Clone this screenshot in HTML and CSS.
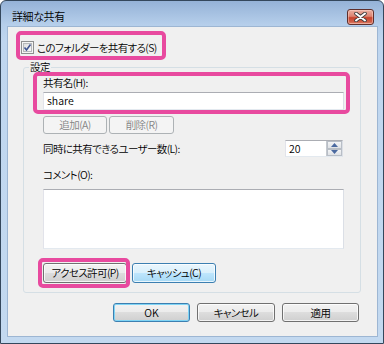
FILE: index.html
```html
<!DOCTYPE html>
<html lang="ja">
<head>
<meta charset="utf-8">
<title>詳細な共有</title>
<link rel="stylesheet" href="styles.css">
</head>
<body>
<div class="window">
  <div class="titlebar">
    <span class="title">詳細な共有</span>
    <div class="close">
      <svg width="13" height="10" viewBox="0 0 13 10">
        <path d="M2 1.5 L11 8.5 M11 1.5 L2 8.5" stroke="#3b3b3b" stroke-width="3.6" stroke-linecap="round"/>
        <path d="M2 1.5 L11 8.5 M11 1.5 L2 8.5" stroke="#ffffff" stroke-width="2" stroke-linecap="round"/>
      </svg>
    </div>
  </div>
  <div class="client">
    <div class="share-check hl-wrap hl-1">
      <span class="checkbox">
        <svg width="13" height="13" viewBox="0 0 13 13">
          <defs>
            <linearGradient id="cbg" x1="0" y1="0" x2="1" y2="1">
              <stop offset="0" stop-color="#dcdcdc"/>
              <stop offset="1" stop-color="#fbfbfb"/>
            </linearGradient>
          </defs>
          <rect x="0.5" y="0.5" width="12" height="12" fill="#f4f4f4" stroke="#8e8f8f"/>
          <rect x="2.5" y="2.5" width="8" height="8" fill="url(#cbg)" stroke="#b6b8ba" stroke-width="1"/>
          <path d="M3.5 6.5 L5.5 9 L9.5 3.5" fill="none" stroke="#3f5591" stroke-width="1.6"/>
        </svg>
      </span>
      <span class="check-text">このフォルダーを共有する(S)</span>
    </div>

    <div class="group">
      <div class="group-title">設定</div>

      <div class="field hl-wrap hl-2">
        <div class="label">共有名(H):</div>
        <div class="textbox">share</div>
      </div>

      <div class="btn-row">
        <div class="btn disabled w-add">追加(A)</div>
        <div class="btn disabled w-del">削除(R)</div>
      </div>

      <div class="limit-row">
        <span class="label">同時に共有できるユーザー数(L):</span>
        <div class="spin">
          <span class="spin-value">20</span>
          <span class="spin-btns">
            <span class="spin-btn"><svg width="7" height="4" viewBox="0 0 7 4"><path d="M0 4 L3.5 0 L7 4 Z" fill="#4b6aa0"/></svg></span>
            <span class="spin-btn"><svg width="7" height="4" viewBox="0 0 7 4"><path d="M0 0 L3.5 4 L7 0 Z" fill="#4b6aa0"/></svg></span>
          </span>
        </div>
      </div>

      <div class="label comment-label">コメント(O):</div>
      <div class="textarea"></div>

      <div class="btn-row2">
        <div class="hl-wrap hl-3"><div class="btn w-wide">アクセス許可(P)</div></div>
        <div class="btn hover w-wide">キャッシュ(C)</div>
      </div>
    </div>

    <div class="footer">
      <div class="btn default w-ok">OK</div>
      <div class="btn w-cancel">キャンセル</div>
      <div class="btn w-apply">適用</div>
    </div>
  </div>
</div>
</body>
</html>
```

FILE: styles.css
```css
* {
  box-sizing: border-box;
}

body {
  margin: 0;
  background: #ffffff;
  font-family: "Noto Sans CJK JP", "Noto Sans", sans-serif;
  font-size: 10.5px;
  font-weight: 350;
  letter-spacing: -0.6px;
  color: #000000;
  font-feature-settings: "palt";
}

.window {
  width: 384px;
  height: 344px;
  border: 1px solid #34475c;
  border-radius: 6px 6px 0 0;
  background: linear-gradient(to bottom, #95b2d7 0px, #b6cfeb 24px, #bfd6ef 40px, #c3d9f0 100%);
  padding: 0 5px 6px 6px;
  display: flex;
  flex-direction: column;
}

.titlebar {
  height: 25px;
  display: flex;
  align-items: flex-start;
  justify-content: space-between;
  padding-left: 5px;
}

.title {
  margin-top: 8px;
  font-size: 11px;
  letter-spacing: -0.4px;
  line-height: 14px;
  color: #000000;
}

.close {
  margin-top: 8px;
  margin-right: 4px;
  width: 27px;
  height: 16px;
  border: 1px solid #5f2f2b;
  border-radius: 3px;
  background: linear-gradient(to bottom, #eab0a2 0%, #dd8371 45%, #c8432c 55%, #d0604a 85%, #e28d74 100%);
  box-shadow: inset 0 0 0 1px rgba(255, 220, 210, 0.45);
  display: flex;
  align-items: center;
  justify-content: center;
}

.client {
  flex: 1;
  background: #f0f0f0;
  border: 1px solid #9db6d3;
  display: flex;
  flex-direction: column;
}

.hl-wrap {
  position: relative;
}

.hl-wrap::after {
  content: "";
  position: absolute;
  border: 4px solid #e84a9f;
  border-radius: 5px;
  pointer-events: none;
}

.share-check {
  display: flex;
  align-items: center;
  gap: 3px;
  width: fit-content;
  height: 13px;
  margin: 14px 0 0 13px;
}

.checkbox {
  display: block;
  width: 13px;
  height: 13px;
}

.checkbox svg {
  display: block;
}

.check-text {
  line-height: 13px;
}

.hl-1::after {
  left: -5px;
  top: -10px;
  right: -9px;
  bottom: -6px;
}

.group {
  margin: 13px 16px 0 15px;
  border: 1px solid #d5dfe5;
  border-radius: 3px;
  padding: 0 16px 9px 19px;
}

.group-title {
  width: fit-content;
  margin: -7px 0 0 -14px;
  padding: 0 1px;
  background: #f0f0f0;
  line-height: 12px;
  height: 12px;
}

.label {
  line-height: 14px;
}

.field {
  margin-top: 3px;
}

.hl-2::after {
  left: -10px;
  top: -4px;
  right: -6px;
  bottom: -4px;
}

.textbox {
  margin-top: 2px;
  height: 18px;
  border: 1px solid;
  border-color: #abadb3 #dbdfe6 #e3e9ef #e2e3ea;
  background: #ffffff;
  padding-left: 3px;
  line-height: 16px;
  letter-spacing: 0;
}

.btn {
  height: 20px;
  border: 1px solid #707070;
  border-radius: 3px;
  background: linear-gradient(to bottom, #f2f2f2 0%, #ebebeb 50%, #dddddd 50%, #cfcfcf 100%);
  box-shadow: inset 0 0 0 1px rgba(255, 255, 255, 0.75);
  display: flex;
  align-items: center;
  justify-content: center;
  line-height: 14px;
  color: #000000;
}

.btn.disabled {
  border-color: #adb2b5;
  background: #f4f4f4;
  box-shadow: none;
  color: #838383;
}

.btn.hover {
  border-color: #3c7fb1;
  background: linear-gradient(to bottom, #eaf6fd 0%, #d9f0fc 50%, #bee6fd 50%, #a7d9f5 100%);
}

.btn.default {
  border-color: #3c7fb1;
  box-shadow: inset 0 0 0 1px #7fd4f5;
  letter-spacing: 0;
}

.btn-row {
  display: flex;
  gap: 2px;
  margin-top: 6px;
}

.btn-row .btn {
  height: 18px;
}

.w-add {
  width: 64px;
}

.w-del {
  width: 65px;
}

.limit-row {
  margin-top: 6px;
  height: 17px;
  display: flex;
  align-items: center;
  justify-content: space-between;
}

.spin {
  display: flex;
  height: 17px;
  width: 58px;
  margin-right: 1px;
  border: 1px solid;
  border-color: #abadb3 #dbdfe6 #e3e9ef #e2e3ea;
  background: #ffffff;
}

.spin-value {
  flex: 1;
  padding-left: 3px;
  line-height: 15px;
  letter-spacing: 0;
}

.spin-btns {
  width: 16px;
  display: flex;
  flex-direction: column;
  border-left: 1px solid #c5c9cf;
}

.spin-btn {
  flex: 1;
  display: flex;
  align-items: center;
  justify-content: center;
  background: linear-gradient(to bottom, #f3f4f6, #dfe2e6);
  border: 1px solid #b8bec6;
}

.spin-btn svg {
  display: block;
}

.comment-label {
  margin-top: 11px;
}

.textarea {
  margin-top: 7px;
  height: 60px;
  border: 1px solid;
  border-color: #abadb3 #dbdfe6 #e3e9ef #e2e3ea;
  background: #ffffff;
}

.btn-row2 {
  display: flex;
  gap: 5px;
  margin-top: 14px;
}

.w-wide {
  width: 84px;
}

.hl-3::after {
  left: -5px;
  top: -5px;
  right: -3px;
  bottom: -5px;
}

.footer {
  display: flex;
  justify-content: flex-end;
  gap: 7px;
  margin-top: 10px;
  padding-right: 18px;
}

.footer .btn {
  height: 19px;
}

.w-ok {
  width: 77px;
}

.w-cancel {
  width: 78px;
}

.w-apply {
  width: 77px;
}
```
